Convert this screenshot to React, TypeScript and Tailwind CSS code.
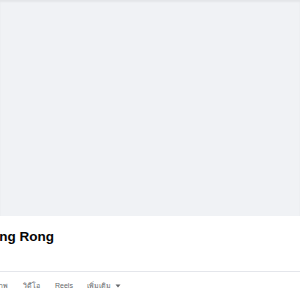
import React from 'react';

const tabs = ['รูปภาพ', 'วิดีโอ', 'Reels'];

export default function App() {
  return (
    <div className="w-[300px] h-[300px] overflow-hidden bg-white" style={{ fontFamily: '"Liberation Sans", "Noto Sans", sans-serif' }}>
      {/* Cover */}
      <div className="h-[216px] bg-[#f0f2f5] shadow-[inset_0_2px_2px_rgba(0,0,0,0.05)]" />

      {/* Page name */}
      <div className="h-[55px] pt-[12px] overflow-hidden">
        <h1 className="-ml-[18px] text-[13.5px] leading-[18px] font-bold text-[#050505] whitespace-nowrap">Nang Rong</h1>
      </div>

      {/* Tabs */}
      <div className="border-t border-[#e4e6eb] overflow-hidden">
        <div className="-ml-[14px] flex items-center gap-[15px] h-[28px] text-[7px] text-[#65676b] whitespace-nowrap">
          {tabs.map((t) => (
            <span key={t}>{t}</span>
          ))}
          <span className="-ml-[1px] flex items-center gap-[4px]">
            เพิ่มเติม
            <svg width="6" height="4" viewBox="0 0 6 4">
              <path d="M0.5 0.5h5L3 3.5z" fill="#65676b" />
            </svg>
          </span>
        </div>
      </div>
    </div>
  );
}
